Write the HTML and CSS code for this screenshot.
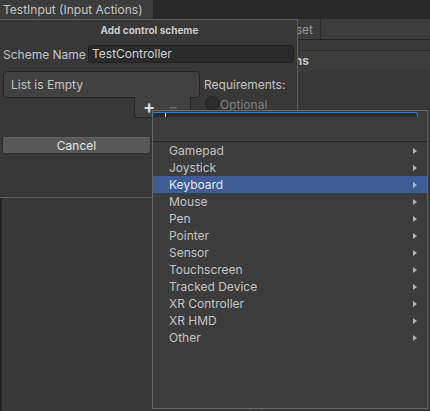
FILE: index.html
```html
<!DOCTYPE html>
<html>
<head>
<meta charset="utf-8">
<link rel="stylesheet" href="styles.css">
</head>
<body>
<div class="editor">
  <div class="tabbar"><div class="tab">TestInput (Input Actions)</div></div>
  <div class="toolbar">
    <div class="tool-left"><span class="tool-btn">Save Asset</span></div>
    <div class="tool-rest"></div>
  </div>
  <div class="subbar"></div>
  <div class="panes">
    <div class="pane pane-maps">
      <div class="pane-head"></div>
    </div>
    <div class="pane-divider"></div>
    <div class="pane pane-actions">
      <div class="pane-head">Actions</div>
    </div>
  </div>
</div>

<div class="dialog">
  <div class="dlg-title">Add control scheme</div>
  <div class="dlg-row">
    <span class="dlg-label">Scheme Name</span>
    <div class="dlg-field">TestController</div>
  </div>
  <div class="dlg-main">
    <div class="list-col">
      <div class="list-box">List is Empty</div>
      <div class="list-foot">
        <span class="lf-plus">+</span>
        <span class="lf-minus">−</span>
      </div>
    </div>
    <div class="req-col">
      <div class="req-title">Requirements:</div>
      <div class="req-opt"><span class="radio"></span><span class="opt-text">Optional</span></div>
    </div>
  </div>
  <div class="dlg-buttons">
    <div class="btn">Cancel</div>
  </div>
</div>

<div class="popup">
  <div class="pop-head">
    <div class="pop-search"><span class="caret"></span></div>
  </div>
  <div class="pop-list">
    <div class="item"><span>Gamepad</span><i class="arrow"></i></div>
    <div class="item"><span>Joystick</span><i class="arrow"></i></div>
    <div class="item selected"><span>Keyboard</span><i class="arrow"></i></div>
    <div class="item"><span>Mouse</span><i class="arrow"></i></div>
    <div class="item"><span>Pen</span><i class="arrow"></i></div>
    <div class="item"><span>Pointer</span><i class="arrow"></i></div>
    <div class="item"><span>Sensor</span><i class="arrow"></i></div>
    <div class="item"><span>Touchscreen</span><i class="arrow"></i></div>
    <div class="item"><span>Tracked Device</span><i class="arrow"></i></div>
    <div class="item"><span>XR Controller</span><i class="arrow"></i></div>
    <div class="item"><span>XR HMD</span><i class="arrow"></i></div>
    <div class="item"><span>Other</span><i class="arrow"></i></div>
  </div>
</div>
</body>
</html>
```
FILE: styles.css
```css
html, body {
  margin: 0;
  padding: 0;
}
body {
  width: 430px;
  height: 411px;
  overflow: hidden;
  background: #383838;
  font-family: Inter, "Noto Sans", sans-serif;
  font-size: 12px;
  color: #c4c4c4;
  position: relative;
}
.editor {
  display: flex;
  flex-direction: column;
  height: 411px;
}
.tabbar {
  height: 19px;
  background: #282828;
  display: flex;
}
.tab {
  width: 153px;
  background: #3c3c3c;
  padding-left: 3px;
  box-sizing: border-box;
  line-height: 20px;
  font-size: 12px;
  color: #c4c4c4;
  white-space: nowrap;
  overflow: hidden;
}
.toolbar {
  height: 20px;
  background: #3c3c3c;
  border-bottom: 1px solid #242424;
  display: flex;
}
.tool-left {
  width: 321px;
  border-right: 1px solid #2a2a2a;
  display: flex;
  justify-content: flex-end;
  align-items: center;
  padding-right: 7px;
  box-sizing: border-box;
}
.tool-btn {
  color: #9a9a9a;
}
.tool-rest {
  flex: 1;
}
.subbar {
  height: 10px;
  background: #3a3a3a;
  border-bottom: 1px solid #2d2d2d;
}
.panes {
  flex: 1;
  display: flex;
}
.pane {
  display: flex;
  flex-direction: column;
}
.pane-maps {
  width: 253px;
  border-left: 2px solid #232323;
  box-sizing: border-box;
}
.pane-divider {
  width: 4px;
  border-left: 1px solid #232323;
  border-right: 1px solid #232323;
}
.pane-actions {
  flex: 1;
}
.pane-head {
  height: 20px;
  line-height: 20px;
  font-weight: bold;
  background: #3c3c3c;
  color: #c4c4c4;
  padding-left: 5px;
}

/* dialog */
.dialog {
  position: absolute;
  left: 0;
  top: 19px;
  width: 297px;
  height: 177px;
  background: #383838;
  border-top: 1px solid #5e5e5e;
  border-right: 1px solid #5e5e5e;
  border-bottom: 1px solid #5e5e5e;
  display: flex;
  flex-direction: column;
}
.dlg-title {
  height: 20px;
  line-height: 20px;
  text-align: center;
  font-weight: bold;
  font-size: 10px;
  color: #c8c8c8;
  padding-left: 2px;
}
.dlg-row {
  margin-top: 5px;
  display: flex;
  align-items: center;
  padding-left: 3px;
}
.dlg-label {
  width: 85px;
  flex: none;
  white-space: nowrap;
}
.dlg-field {
  width: 206px;
  height: 18px;
  box-sizing: border-box;
  background: #2a2a2a;
  border: 1px solid #212121;
  border-radius: 3px;
  line-height: 16px;
  padding-left: 3px;
  color: #d2d2d2;
}
.dlg-main {
  margin-top: 8px;
  display: flex;
  padding-left: 3px;
}
.list-col {
  width: 197px;
  display: flex;
  flex-direction: column;
}
.list-box {
  height: 27px;
  box-sizing: border-box;
  background: #414141;
  border: 1px solid #242424;
  border-radius: 4px;
  line-height: 25px;
  padding-left: 7px;
}
.list-foot {
  align-self: flex-end;
  margin-right: 9px;
  margin-top: -1px;
  width: 57px;
  height: 21px;
  box-sizing: border-box;
  background: #414141;
  border: 1px solid #242424;
  border-top: none;
  border-radius: 0 0 4px 4px;
  display: flex;
  align-items: center;
  padding-left: 8px;
  gap: 13px;
}
.lf-plus {
  font-size: 18px;
  font-weight: bold;
  color: #dedede;
  line-height: 18px;
}
.lf-minus {
  font-size: 15px;
  color: #707070;
  line-height: 18px;
}
.req-col {
  margin-left: 4px;
  display: flex;
  flex-direction: column;
  padding-top: 6px;
}
.req-title {
  line-height: 15px;
}
.req-opt {
  display: flex;
  align-items: center;
  margin-top: 2px;
  margin-left: 1px;
}
.radio {
  width: 13px;
  height: 13px;
  border-radius: 50%;
  background: #2c2c2c;
  border: 1px solid #232323;
}
.opt-text {
  color: #7f7f7f;
  margin-top: 3px;
}
.dlg-buttons {
  margin-top: 19px;
  padding-left: 2px;
  display: flex;
}
.btn {
  width: 149px;
  height: 17px;
  box-sizing: border-box;
  background: #585858;
  border: 1px solid #303030;
  border-top-color: #646464;
  border-radius: 3px;
  text-align: center;
  line-height: 15px;
  color: #e4e4e4;
}

/* popup */
.popup {
  position: absolute;
  left: 152px;
  top: 110px;
  width: 276px;
  height: 299px;
  box-sizing: border-box;
  background: #3c3c3c;
  border: 1px solid #686868;
  display: flex;
  flex-direction: column;
}
.pop-head {
  height: 30px;
  border-bottom: 1px solid #252525;
}
.pop-search {
  margin-top: 1px;
  margin-right: 9px;
  margin-left: -1px;
  height: 4px;
  background: #2a2a2a;
  border: 1px solid #3a79bb;
  border-bottom: none;
  border-radius: 3px 3px 0 0;
  position: relative;
}
.caret {
  position: absolute;
  left: 12px;
  top: 0;
  width: 1px;
  height: 4px;
  background: #d8d8d8;
}
.pop-list {
  display: flex;
  flex-direction: column;
}
.item {
  height: 17px;
  display: flex;
  align-items: center;
  justify-content: space-between;
  padding-left: 16px;
  padding-right: 10px;
  color: #c4c4c4;
  white-space: nowrap;
}
.item.selected {
  background: #3d5d94;
  color: #e6e6e6;
}
.arrow {
  width: 0;
  height: 0;
  border-left: 4px solid #b4b4b4;
  border-top: 3px solid transparent;
  border-bottom: 3px solid transparent;
}
```
